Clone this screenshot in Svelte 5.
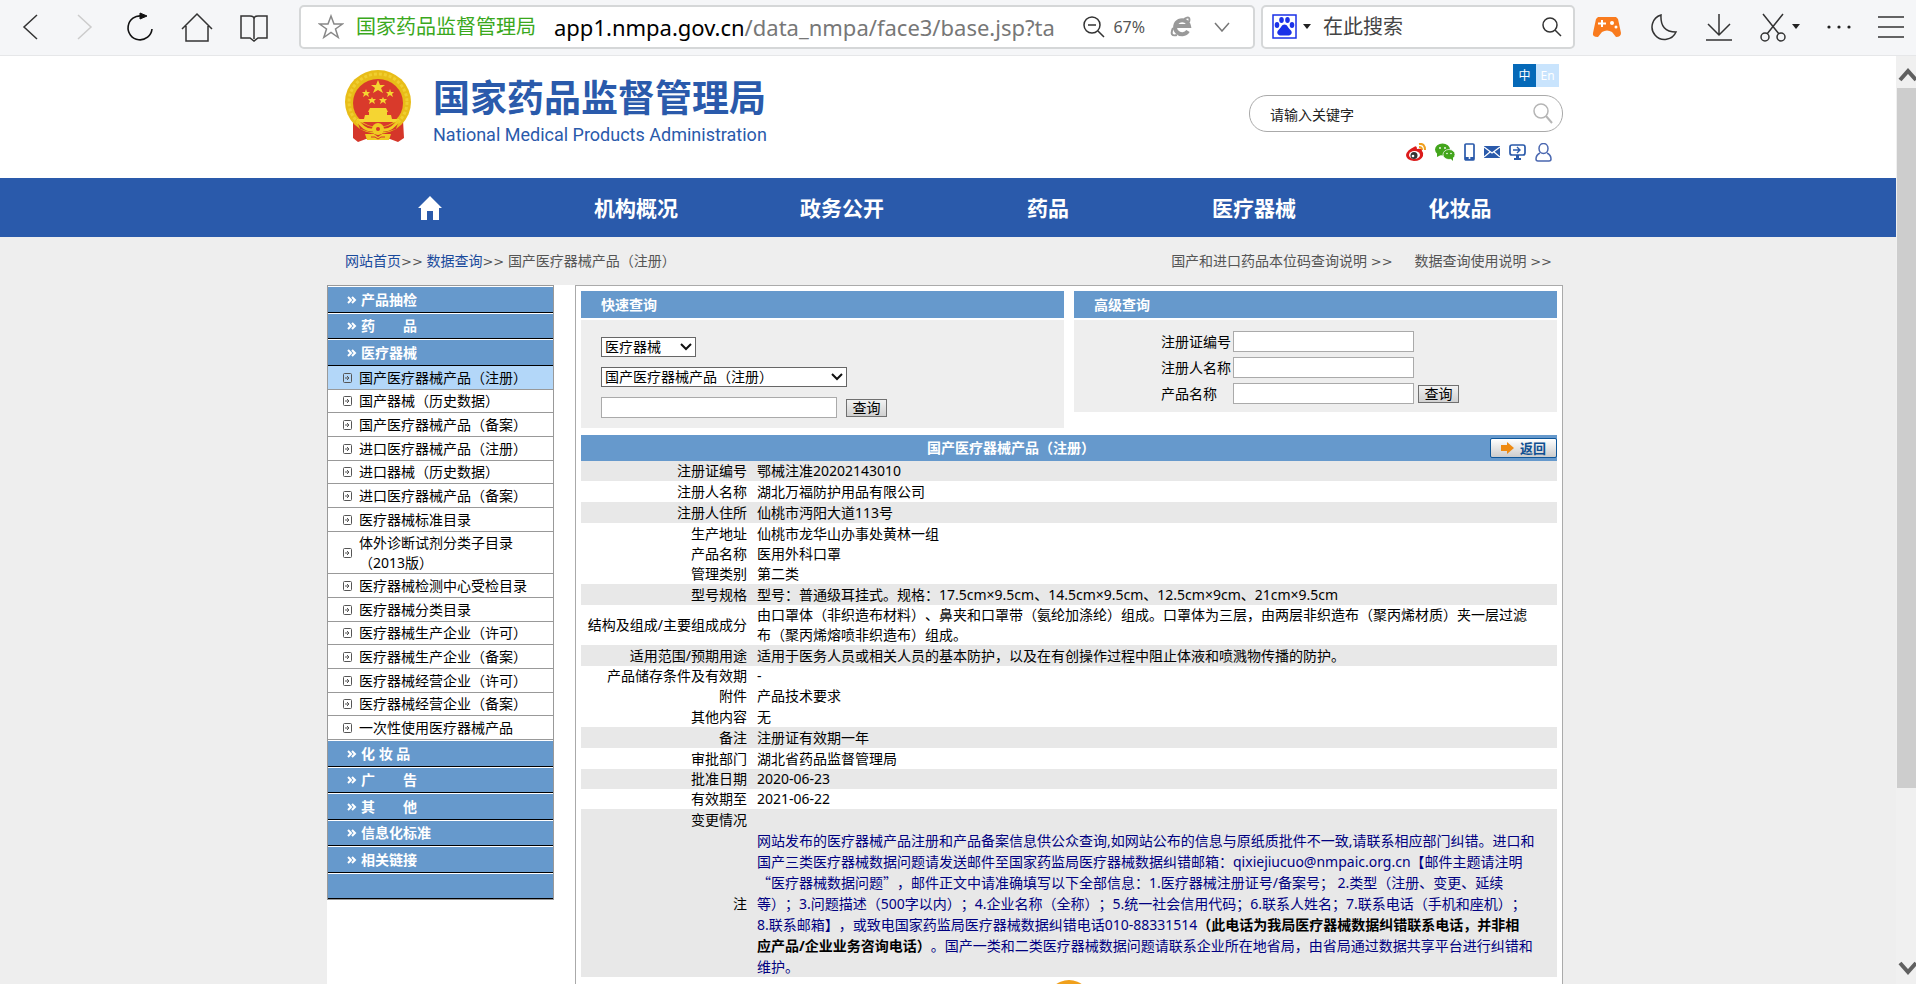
<script lang="ts">
	type Row = { label: string; value: string; shaded?: boolean };

	let keyword = $state('请输入关键字');
	let category = $state('医疗器械');
	let product = $state('国产医疗器械产品（注册）');
	let active = $state('国产医疗器械产品（注册）');

	const nav = ['机构概况', '政务公开', '药品', '医疗器械', '化妆品'];

	const groupsTop = ['产品抽检', '药　　品', '医疗器械'];
	const groupsBottom = ['化 妆 品', '广　　告', '其　　他', '信息化标准', '相关链接', ''];

	const devices = [
		'国产医疗器械产品（注册）',
		'国产器械（历史数据）',
		'国产医疗器械产品（备案）',
		'进口医疗器械产品（注册）',
		'进口器械（历史数据）',
		'进口医疗器械产品（备案）',
		'医疗器械标准目录',
		'体外诊断试剂分类子目录（2013版）',
		'医疗器械检测中心受检目录',
		'医疗器械分类目录',
		'医疗器械生产企业（许可）',
		'医疗器械生产企业（备案）',
		'医疗器械经营企业（许可）',
		'医疗器械经营企业（备案）',
		'一次性使用医疗器械产品'
	];

	const rows: Row[] = [
		{ label: '注册证编号', value: '鄂械注准20202143010', shaded: true },
		{ label: '注册人名称', value: '湖北万福防护用品有限公司' },
		{ label: '注册人住所', value: '仙桃市沔阳大道113号', shaded: true },
		{ label: '生产地址', value: '仙桃市龙华山办事处黄林一组' },
		{ label: '产品名称', value: '医用外科口罩' },
		{ label: '管理类别', value: '第二类' },
		{ label: '型号规格', value: '型号：普通级耳挂式。规格：17.5cm×9.5cm、14.5cm×9.5cm、12.5cm×9cm、21cm×9.5cm', shaded: true },
		{ label: '结构及组成/主要组成成分', value: '由口罩体（非织造布材料）、鼻夹和口罩带（氨纶加涤纶）组成。口罩体为三层，由两层非织造布（聚丙烯材质）夹一层过滤\n布（聚丙烯熔喷非织造布）组成。' },
		{ label: '适用范围/预期用途', value: '适用于医务人员或相关人员的基本防护，以及在有创操作过程中阻止体液和喷溅物传播的防护。', shaded: true },
		{ label: '产品储存条件及有效期', value: '-' },
		{ label: '附件', value: '产品技术要求' },
		{ label: '其他内容', value: '无' },
		{ label: '备注', value: '注册证有效期一年', shaded: true },
		{ label: '审批部门', value: '湖北省药品监督管理局' },
		{ label: '批准日期', value: '2020-06-23', shaded: true },
		{ label: '有效期至', value: '2021-06-22' },
		{ label: '变更情况', value: '', shaded: true }
	];
</script>

{#snippet groupHead(name: string)}
	<li>
		<a class="group" href="#group">
			{#if name}
				<svg width="10" height="8" viewBox="0 0 10 8"><path d="M1 1l3 3-3 3M5 1l3 3-3 3" fill="none" stroke="#fff" stroke-width="2" /></svg>
				<span>{name}</span>
			{/if}
		</a>
	</li>
{/snippet}

{#snippet selectArrow()}
	<svg class="select-arrow" width="12" height="8" viewBox="0 0 12 8"><path d="M1 1l5 5 5-5" fill="none" stroke="#111" stroke-width="2" /></svg>
{/snippet}

<div class="browser">
	<div class="toolbar">
		<div class="tools">
			<button type="button" aria-label="后退">
				<svg width="28" height="32" viewBox="0 0 28 32"><path d="M21 4L8 16l13 12" /></svg>
			</button>
			<button type="button" class="faded" aria-label="前进">
				<svg width="28" height="32" viewBox="0 0 28 32"><path d="M7 4l13 12L7 28" /></svg>
			</button>
			<button type="button" aria-label="刷新">
				<svg width="28" height="32" viewBox="0 0 28 32"><path d="M16 5A12 12 0 1 0 26 18" stroke="#111" stroke-width="1.600" /><path d="M14 2l7 3-7 3z" fill="#111" stroke="#111" stroke-width="1" /></svg>
			</button>
			<button type="button" aria-label="主页">
				<svg width="32" height="32" viewBox="0 0 32 32"><path d="M1 18L16 3l15 15M5 15v15h22V15" /></svg>
			</button>
			<button type="button" aria-label="阅读">
				<svg width="28" height="32" viewBox="0 0 28 32"><path d="M1 5h9q4 0 4 3q0-3 4-3h9v22h-9l-4 3-4-3H1zM14 8v20" /></svg>
			</button>
		</div>
		<div class="address">
			<svg width="26" height="26" viewBox="0 0 26 26"><path d="M13 2l3 8h8.500l-7 5 2.700 8.500L13 18.500 5.800 23.500l2.700-8.500-7-5H10z" stroke="#888" /></svg>
			<span class="site">国家药品监督管理局</span>
			<span class="url"><b>app1.nmpa.gov.cn</b>/data_nmpa/face3/base.jsp?ta</span>
			<button type="button" class="zoom">
				<svg width="22" height="22" viewBox="0 0 22 22"><circle cx="9" cy="9" r="8" /><path d="M15 15l6 6M5 9h8" /></svg>
				<span>67%</span>
			</button>
			<button type="button" aria-label="兼容模式">
				<svg width="22" height="22" viewBox="0 0 22 22"><path d="M18 15a7 7 0 1 1 1-5H6" stroke="#999" stroke-width="4" /><path d="M14 3q7-4 5 3M3 12q-4 9 4 7" stroke="#999" stroke-width="2" /></svg>
			</button>
			<button type="button" aria-label="展开">
				<svg width="16" height="10" viewBox="0 0 16 10"><path d="M1 1l7 8 7-8" stroke="#777" /></svg>
			</button>
		</div>
		<div class="engine">
			<button type="button" aria-label="搜索引擎">
				<svg width="25" height="25" viewBox="0 0 25 25"><rect x="1" y="1" width="23" height="23" fill="#fff" stroke="#1a31e8" stroke-width="1.500" /><g fill="#1a31e8" stroke="none"><ellipse cx="5" cy="11" rx="2.300" ry="3" /><ellipse cx="9.500" cy="6" rx="2.300" ry="3" /><ellipse cx="15.500" cy="6" rx="2.300" ry="3" /><ellipse cx="20" cy="11" rx="2.300" ry="3" /><path d="M12.500 10.500c3 0 3 3 6 5.500 3 3 0 6-3 5.500h-6c-3 .5-6-2.500-3-5.500 3-2.500 3-5.500 6-5.500z" /></g></svg>
				<svg width="8" height="6" viewBox="0 0 8 6"><path d="M0 0h8L4 5z" fill="#222" stroke="none" /></svg>
			</button>
			<input type="text" aria-label="在此搜索" placeholder="在此搜索" />
			<button type="button" aria-label="搜索">
				<svg width="20" height="20" viewBox="0 0 20 20"><circle cx="8" cy="8" r="7" /><path d="M13 13l6 6" /></svg>
			</button>
		</div>
		<div class="extras">
			<button type="button" aria-label="游戏">
				<svg width="32" height="24" viewBox="0 0 32 24"><path d="M7 2h18l2 2 3 14q0 4-5 4l-4-5q-5-3-10 0l-4 5q-6 0-5-4L5 4z" fill="#f97b1e" stroke="none" /><path d="M11 5v7M7 8.500h8" stroke="#fff" stroke-width="2" /><circle cx="21" cy="8" r="2" fill="#fff" stroke="none" /><circle cx="25" cy="12" r="1.500" fill="#fff" stroke="none" /></svg>
			</button>
			<button type="button" aria-label="夜间模式">
				<svg width="28" height="30" viewBox="0 0 28 30"><path d="M11 3A12.500 12.500 0 1 0 26 20Q10 20 11 3z" /></svg>
			</button>
			<button type="button" aria-label="下载">
				<svg width="28" height="30" viewBox="0 0 28 30"><path d="M14 2v21M3 12l11 11 11-11M1 28h26" /></svg>
			</button>
			<button type="button" aria-label="截图">
				<svg width="26" height="30" viewBox="0 0 26 30"><path d="M3 2l16 20M23 2L7 22" /><circle cx="5" cy="25" r="4" /><circle cx="21" cy="25" r="4" /></svg>
				<svg width="8" height="6" viewBox="0 0 8 6"><path d="M0 0h8L4 5z" fill="#222" stroke="none" /></svg>
			</button>
			<button type="button" aria-label="更多">
				<svg width="24" height="4" viewBox="0 0 24 4"><g fill="#222" stroke="none"><circle cx="2" cy="2" r="1.600" /><circle cx="12" cy="2" r="1.600" /><circle cx="22" cy="2" r="1.600" /></g></svg>
			</button>
			<button type="button" aria-label="菜单">
				<svg width="26" height="24" viewBox="0 0 26 24"><path d="M0 2h26M0 12h26M0 22h26" /></svg>
			</button>
		</div>
	</div>

	<div class="viewport">
		<div class="page">
			<header>
				<div class="wrap masthead">
					<div class="brand">
						<svg width="66" height="72" viewBox="0 0 66 72">
							<path d="M8 50h50l1 18-6 4-8-3H21l-8 3-5-4z" fill="#d5362a" />
							<ellipse cx="33" cy="32" rx="33" ry="32" fill="#e8bd18" />
							<ellipse cx="33" cy="32" rx="29" ry="28" fill="none" stroke="#f0ce30" stroke-width="3" stroke-dasharray="3 2" />
							<ellipse cx="33" cy="33" rx="25" ry="24" fill="#d93a2b" />
							<g fill="#f5d532">
								<path d="M33 10l2 5h5l-4 3 2 5-5-3-5 3 2-5-4-3h5z" />
								<path d="M21 19l1 3h3l-2 2 1 3-3-2-3 2 1-3-2-2h3zM45 19l1 3h3l-2 2 1 3-3-2-3 2 1-3-2-2h3zM27 27l1 2h3l-2 2 1 3-3-2-3 2 1-3-2-2h3zM38 27l1 2h3l-2 2 1 3-3-2-3 2 1-3-2-2h3z" />
								<path d="M25 38h16l2 4h-1v3h4l1 4h7v3H12v-3h7l1-4h4v-3h-1z" />
							</g>
							<path d="M12 50q21 15 42 0l-3 9-10 3H25l-10-3z" fill="#d5362a" />
							<path d="M12 50q7 10 14 10h14q7 0 14-10" fill="none" stroke="#f0cb22" stroke-width="3" />
							<circle cx="33" cy="59" r="6" fill="#f0cb22" />
							<circle cx="33" cy="59" r="2" fill="#d5362a" />
							<path d="M20 64h9l4 3 4-3h9l-2 6H22z" fill="#f0cb22" />
							<path d="M26 67h4l3 2 3-2h4" fill="none" stroke="#d5362a" />
						</svg>
						<div>
							<h1>国家药品监督管理局</h1>
							<p>National Medical Products Administration</p>
						</div>
					</div>
					<div class="utilities">
						<div class="langs">
							<a href="#zh" class="on">中</a>
							<a href="#en">En</a>
						</div>
						<form class="search" onsubmit={(e) => e.preventDefault()}>
							<input type="text" aria-label="关键字" bind:value={keyword} />
							<button type="submit" aria-label="搜索">
								<svg width="22" height="22" viewBox="0 0 22 22"><circle cx="9" cy="8" r="7" fill="none" stroke="#b5b5b5" stroke-width="1.500" /><path d="M14 13l6 7" stroke="#b5b5b5" stroke-width="2" /></svg>
							</button>
						</form>
						<div class="social">
							<a href="#weibo" aria-label="微博">
								<svg width="20" height="18" viewBox="0 0 20 18"><path d="M13 1q6-1 6 6M13 4q3 0 3 3" fill="none" stroke="#f0a01e" stroke-width="2" /><path d="M8 4q3-2 3 2 5-1 5 2 2 2 1 5-2 5-9 5Q0 17 0 12q1-5 8-8z" fill="#dc1b1b" /><ellipse cx="8.500" cy="12" rx="5.500" ry="4" fill="#fff" /><circle cx="8" cy="12.500" r="3.500" fill="#333" /><circle cx="7" cy="13" r="1.300" fill="#fff" /></svg>
							</a>
							<a href="#wechat" aria-label="微信">
								<svg width="20" height="18" viewBox="0 0 20 18"><ellipse cx="7.500" cy="6.500" rx="7.500" ry="6" fill="#43a51c" /><path d="M2 10l0 4 4-2z" fill="#43a51c" /><ellipse cx="14" cy="11.500" rx="6" ry="5" fill="#43a51c" stroke="#fff" stroke-width=".7" /><path d="M15 15l3 3v-4z" fill="#43a51c" /><g fill="#fff"><circle cx="5" cy="5" r=".9" /><circle cx="10" cy="5" r=".9" /><circle cx="12" cy="10.500" r=".8" /><circle cx="16" cy="10.500" r=".8" /></g></svg>
							</a>
							<a href="#mobile" aria-label="手机">
								<svg width="11" height="18" viewBox="0 0 11 18"><rect x="1" y="1" width="9" height="16" rx="1" fill="#fff" stroke="#2a5aab" stroke-width="1.700" /><path d="M1 14h9v3H1z" fill="#2a5aab" /><circle cx="5.500" cy="15" r="1" fill="#fff" /></svg>
							</a>
							<a href="#mail" aria-label="邮箱">
								<svg width="16" height="12" viewBox="0 0 16 12"><path d="M0 0h16v12H0z" fill="#2a5aab" /><path d="M0 1l8 6 8-6M0 11l6-5M16 11l-6-5" fill="none" stroke="#fff" stroke-width="1.300" /></svg>
							</a>
							<a href="#screen" aria-label="电脑版">
								<svg width="17" height="16" viewBox="0 0 17 16"><rect x="1" y="1" width="15" height="10" rx="2" fill="#fff" stroke="#2a5aab" stroke-width="1.700" /><path d="M4 6h7M8 3l3 3-3 3" fill="none" stroke="#2a5aab" stroke-width="1.400" /><path d="M7 11h3v3h2v2H5v-2h2z" fill="#2a5aab" /></svg>
							</a>
							<a href="#user" aria-label="用户">
								<svg width="17" height="19" viewBox="0 0 17 19"><ellipse cx="8.500" cy="5.500" rx="4.500" ry="5" fill="none" stroke="#4a67b0" stroke-width="1.500" /><path d="M5 10q-4 2-4 6 0 2 2 2h11q2 0 2-2 0-4-4-6" fill="none" stroke="#4a67b0" stroke-width="1.500" /></svg>
							</a>
						</div>
					</div>
				</div>
			</header>

			<nav>
				<div class="wrap menu">
					<a href="#home" aria-label="首页">
						<svg width="26" height="26" viewBox="0 0 26 26"><path d="M13 1l12 12h-3v12h-6v-9h-6v9H4V13H1z" fill="#fff" /></svg>
					</a>
					{#each nav as item (item)}
						<a href="#nav">{item}</a>
					{/each}
				</div>
			</nav>

			<div class="wrap crumbs">
				<div>
					<a href="#home">网站首页</a><span class="arrows">&gt;&gt;</span>
					<a href="#data">数据查询</a><span class="arrows">&gt;&gt;</span>
					<span>国产医疗器械产品（注册）</span>
				</div>
				<div class="help">
					<a href="#codes">国产和进口药品本位码查询说明 <span class="arrows">&gt;&gt;</span></a>
					<a href="#usage">数据查询使用说明 <span class="arrows">&gt;&gt;</span></a>
				</div>
			</div>

			<div class="wrap body">
				<div class="columns">
					<aside>
						<div class="side">
							<ul class="groups">
								{#each groupsTop as name (name)}
									{@render groupHead(name)}
								{/each}
							</ul>
							<ul class="items">
								{#each devices as name (name)}
									<li class:two={name.length > 15}>
										<a href="#item" class:active={name === active} onclick={() => (active = name)}>
											<svg width="9" height="10" viewBox="0 0 9 10"><rect x=".5" y=".5" width="8" height="9" rx="1" fill="none" stroke="#555" /><path d="M2 5h4M4 3l2 2-2 2" fill="none" stroke="#555" /></svg>
											<span>{name}</span>
										</a>
									</li>
								{/each}
							</ul>
							<ul class="groups">
								{#each groupsBottom as name (name)}
									{@render groupHead(name)}
								{/each}
							</ul>
						</div>
					</aside>

					<main>
						<div class="panels">
							<section>
								<h2>快速查询</h2>
								<form class="quick" onsubmit={(e) => e.preventDefault()}>
									<div class="select narrow">
										<select aria-label="类别" bind:value={category}>
											<option>医疗器械</option>
											<option>药品</option>
											<option>化妆品</option>
										</select>
										{@render selectArrow()}
									</div>
									<div class="select wide">
										<select aria-label="产品" bind:value={product}>
											{#each devices as name (name)}
												<option>{name}</option>
											{/each}
										</select>
										{@render selectArrow()}
									</div>
									<div class="line">
										<input type="text" aria-label="关键字" />
										<button type="submit" class="query">查询</button>
									</div>
								</form>
							</section>
							<section>
								<h2>高级查询</h2>
								<form class="advanced" onsubmit={(e) => e.preventDefault()}>
									<label for="cert">注册证编号</label>
									<input id="cert" type="text" />
									<span></span>
									<label for="owner">注册人名称</label>
									<input id="owner" type="text" />
									<span></span>
									<label for="name">产品名称</label>
									<input id="name" type="text" />
									<button type="submit" class="query">查询</button>
								</form>
							</section>
						</div>

						<div class="title-bar">
							<h2>国产医疗器械产品（注册）</h2>
							<div class="back-cell">
								<button type="button" class="back">
									<svg width="13" height="12" viewBox="0 0 13 12"><path d="M0 3h6V0l7 6-7 6V9H0z" fill="#ee8a12" /></svg>
									返回
								</button>
							</div>
						</div>
						<table>
							<tbody>
								{#each rows as row (row.label)}
									<tr class:shaded={row.shaded}>
										<th scope="row">{row.label}</th>
										<td>{row.value}</td>
									</tr>
								{/each}
								<tr class="shaded note">
									<th scope="row">注</th>
									<td>
										网站发布的医疗器械产品注册和产品备案信息供公众查询,如网站公布的信息与原纸质批件不一致,请联系相应部门纠错。进口和<br />国产三类医疗器械数据问题请发送邮件至国家药监局医疗器械数据纠错邮箱：qixiejiucuo@nmpaic.org.cn【邮件主题请注明<br /><span class="quote">“</span>医疗器械数据问题<span class="quote">”</span>，邮件正文中请准确填写以下全部信息：1.医疗器械注册证号/备案号； 2.类型（注册、变更、延续<br />等）；3.问题描述（500字以内）；4.企业名称（全称）；5.统一社会信用代码；6.联系人姓名；7.联系电话（手机和座机）；<br />8.联系邮箱】，或致电国家药监局医疗器械数据纠错电话010-88331514<strong>（此电话为我局医疗器械数据纠错联系电话，并非相<br />应产品/企业业务咨询电话）</strong>。国产一类和二类医疗器械数据问题请联系企业所在地省局，由省局通过数据共享平台进行纠错和<br />维护。
									</td>
								</tr>
							</tbody>
						</table>
						<div class="badge">
							<svg width="44" height="44" viewBox="0 0 44 44"><circle cx="22" cy="22" r="22" fill="#f0a01c" /><circle cx="22" cy="24" r="20" fill="#f7c34f" /></svg>
						</div>
					</main>
				</div>
			</div>
		</div>

		<div class="scrollbar">
			<svg width="18" height="32" viewBox="0 0 18 32"><path d="M2 24l8-9 8 9" fill="none" stroke="#606060" stroke-width="4" /></svg>
			<div class="track"><div class="thumb"></div></div>
			<svg width="18" height="32" viewBox="0 0 18 32"><path d="M2 11l8 9 8-9" fill="none" stroke="#606060" stroke-width="4" /></svg>
		</div>
	</div>
</div>

<style>
	:global(body) {
		margin: 0;
		background: #eee;
	}

	.browser {
		height: 100vh;
		display: flex;
		flex-direction: column;
		overflow: hidden;
		font-family: 'Noto Sans', 'Noto Sans CJK SC', sans-serif;
		font-size: 14px;
		line-height: 20px;
		text-spacing-trim: space-all;
		color: #000;
	}

	h1, h2, p, ul {
		margin: 0;
		padding: 0;
	}

	ul {
		list-style: none;
	}

	a {
		color: inherit;
		text-decoration: none;
	}

	svg {
		display: block;
		flex-shrink: 0;
	}

	input, select, button {
		font-family: inherit;
		font-size: 14px;
		box-sizing: border-box;
		border-radius: 0;
		margin: 0;
	}

	/* browser toolbar */

	.toolbar {
		flex: none;
		display: flex;
		align-items: center;
		box-sizing: border-box;
		height: 56px;
		padding: 0 12px 2px 16px;
		background: #f5f6f8;
		border-bottom: 1px solid #e6e7e9;
	}

	.toolbar button {
		display: flex;
		align-items: center;
		gap: 6px;
		padding: 0;
		border: 0;
		background: none;
		color: #555;
	}

	.toolbar svg {
		fill: none;
		stroke: #333;
		stroke-width: 1.5px;
	}

	.toolbar .faded svg {
		stroke: #ccc;
	}

	.tools {
		display: flex;
		align-items: center;
		gap: 27px;
		width: 283px;
	}

	.address, .engine {
		display: flex;
		align-items: center;
		box-sizing: border-box;
		height: 44px;
		background: #fff;
		border: 2px solid #d5d7d8;
		border-radius: 5px;
	}

	.address {
		flex: 1;
		min-width: 0;
		padding: 0 23px 0 17px;
	}

	.site {
		margin: 0 18px 0 12px;
		font-size: 20px;
		line-height: 30px;
		white-space: nowrap;
		color: #3aa81c;
	}

	.url {
		flex: 1;
		min-width: 0;
		margin-right: 24px;
		overflow: hidden;
		font-size: 22px;
		line-height: 30px;
		white-space: nowrap;
		color: #777;
	}

	.url b {
		font-weight: 400;
		color: #000;
	}

	.toolbar .zoom {
		gap: 8px;
		margin-right: 25px;
		font-size: 16px;
	}

	.address button + button + button {
		margin-left: 22px;
	}

	.engine {
		width: 314px;
		margin: 0 16px 0 6px;
		padding: 0 11px 0 9px;
	}

	.engine input {
		flex: 1;
		min-width: 0;
		padding: 0 12px;
		border: 0;
		background: none;
		font-size: 20px;
		outline: 0;
	}

	.engine input::placeholder {
		color: #444;
	}

	.extras {
		display: flex;
		align-items: center;
		justify-content: space-between;
		width: 313px;
	}

	/* site */

	.viewport {
		flex: 1;
		min-height: 0;
		display: flex;
	}

	.page {
		flex: 1;
		min-width: 0;
		overflow: hidden;
	}

	.wrap {
		box-sizing: border-box;
		width: 100%;
		max-width: 1242px;
		margin: 0 auto;
		padding-right: 6px;
	}

	header {
		background: #fff;
	}

	.masthead {
		display: flex;
		justify-content: space-between;
		height: 122px;
		padding-left: 18px;
	}

	.brand {
		display: flex;
		align-items: flex-start;
		gap: 22px;
		padding-top: 14px;
		color: #2a5aab;
	}

	.brand h1 {
		font-size: 37px;
		line-height: 55px;
		font-weight: 700;
	}

	.brand p {
		font-family: Roboto, sans-serif;
		font-size: 18px;
		line-height: 20px;
	}

	.utilities {
		width: 314px;
		padding-top: 8px;
	}

	.langs {
		display: flex;
		justify-content: flex-end;
		padding-right: 4px;
		font-size: 12px;
		line-height: 23px;
		text-align: center;
		color: #fff;
	}

	.langs a {
		width: 23px;
		background: #c9e4fd;
	}

	.langs .on {
		background: #0569b8;
	}

	.search {
		display: flex;
		align-items: center;
		box-sizing: border-box;
		height: 37px;
		margin-top: 8px;
		padding: 0 8px 0 20px;
		border: 1px solid #aaa;
		border-radius: 18px;
	}

	.search input {
		flex: 1;
		min-width: 0;
		padding: 0;
		border: 0;
		background: none;
		color: #222;
		outline: 0;
	}

	.search button {
		padding: 0;
		border: 0;
		background: none;
	}

	.social {
		display: flex;
		align-items: center;
		justify-content: flex-end;
		gap: 9px;
		height: 20px;
		margin-top: 10px;
		padding-right: 11px;
	}

	nav {
		background: #2a5aab;
	}

	.menu {
		display: grid;
		grid-template-columns: repeat(6, 1fr);
		height: 59px;
	}

	.menu a {
		display: flex;
		align-items: center;
		justify-content: center;
		font-size: 21px;
		font-weight: 700;
		color: #fff;
	}

	.crumbs {
		display: flex;
		align-items: center;
		justify-content: space-between;
		height: 48px;
		padding: 0 17px 0 18px;
		color: #555;
	}

	.crumbs > div:first-child a {
		color: #1a4a9c;
	}

	.arrows {
		font-family: 'DejaVu Sans', sans-serif;
		font-size: 13px;
	}

	.help {
		display: flex;
		gap: 22px;
	}

	.columns {
		display: flex;
		gap: 21px;
		min-height: 100vh;
		background: #fff;
	}

	aside {
		width: 227px;
		flex: none;
	}

	.side {
		border: 1px solid #999;
	}

	.group {
		display: flex;
		align-items: center;
		gap: 4px;
		box-sizing: border-box;
		height: 27px;
		padding-left: 19px;
		background: #6699cc;
		border-top: 1px solid #fff;
		border-bottom: 1px solid #000;
		font-weight: 700;
		color: #fff;
	}

	.groups li:nth-child(even) .group {
		height: 26px;
	}

	.items a {
		display: flex;
		align-items: center;
		gap: 7px;
		box-sizing: border-box;
		height: 24px;
		padding: 0 20px 0 15px;
		border-bottom: 1px solid #999;
	}

	.items li:nth-child(3n + 2) a {
		height: 23px;
	}

	.items li.two a {
		height: 42px;
	}

	.items .active {
		background: #b3d7f9;
	}

	main {
		flex: 1;
		min-width: 0;
		padding: 5px;
		border: 1px solid #aaa;
		border-bottom: 0;
	}

	.panels {
		display: grid;
		grid-template-columns: 1fr 1fr;
		align-items: start;
		gap: 10px;
	}

	.panels h2 {
		padding-left: 20px;
		margin-bottom: 2px;
		background: #6699cc;
		font-size: 14px;
		line-height: 27px;
		color: #fff;
	}

	.panels input {
		height: 21px;
		border: 1px solid #aaa;
		background: #fff;
	}

	.quick {
		display: flex;
		flex-direction: column;
		gap: 10px;
		padding: 17px 20px 10px;
		background: #eee;
	}

	.select {
		display: grid;
		align-items: center;
	}

	.narrow {
		width: 95px;
	}

	.wide {
		width: 246px;
	}

	.select select {
		grid-area: 1 / 1;
		height: 20px;
		padding: 0 3px;
		border: 1px solid #666;
		background: #fff;
		line-height: 18px;
		color: #000;
		appearance: none;
	}

	.select-arrow {
		grid-area: 1 / 1;
		justify-self: end;
		margin-right: 4px;
		pointer-events: none;
	}

	.line {
		display: flex;
		align-items: center;
		gap: 9px;
	}

	.line input {
		width: 236px;
	}

	.query {
		width: 41px;
		height: 18px;
		padding: 0;
		border: 1px solid #707070;
		background: linear-gradient(#f2f2f2, #d0d0d0);
		line-height: 16px;
		color: #000;
	}

	.advanced {
		display: grid;
		grid-template-columns: 72px 181px auto;
		align-items: center;
		justify-items: start;
		row-gap: 5px;
		padding: 11px 20px 8px 87px;
		background: #eee;
	}

	.advanced input {
		width: 100%;
	}

	.advanced button {
		margin-left: 4px;
	}

	.title-bar {
		display: flex;
		align-items: center;
		height: 26px;
		margin-top: 7px;
		background: #6699cc;
	}

	.title-bar h2 {
		flex: 1;
		font-size: 14px;
		text-align: center;
		color: #fff;
	}

	.back-cell {
		display: flex;
		justify-content: flex-end;
		width: 116px;
	}

	.back {
		display: flex;
		align-items: center;
		justify-content: center;
		gap: 6px;
		width: 67px;
		height: 20px;
		padding: 0;
		border: 1px solid #0f5699;
		border-radius: 2px;
		background: linear-gradient(#fff, #ccc);
		font-size: 13px;
		font-weight: 700;
		line-height: 16px;
		color: #0f4f91;
	}

	table {
		width: 100%;
		border-collapse: collapse;
	}

	tr {
		height: 21px;
	}

	tr:nth-child(5n),
	tr:nth-child(5n + 1) {
		height: 20px;
	}

	th, td {
		padding: 0;
		vertical-align: middle;
		white-space: pre-line;
	}

	th {
		width: 166px;
		font-weight: 400;
		text-align: right;
		white-space: nowrap;
	}

	td {
		padding-left: 10px;
	}

	.shaded {
		background: #e8e8e8;
	}

	.note td {
		line-height: 21px;
		color: #000080;
		white-space: nowrap;
	}

	.note strong {
		color: #000;
	}

	.quote {
		font-family: 'Noto Sans CJK SC', sans-serif;
	}

	.badge {
		display: flex;
		justify-content: center;
		padding-top: 3px;
	}

	.scrollbar {
		display: flex;
		flex-direction: column;
		align-items: flex-end;
		width: 20px;
		background: #f0f0f0;
	}

	.track {
		flex: 1;
		width: 19px;
	}

	.thumb {
		height: 81%;
		background: #cdcdcd;
	}
</style>
